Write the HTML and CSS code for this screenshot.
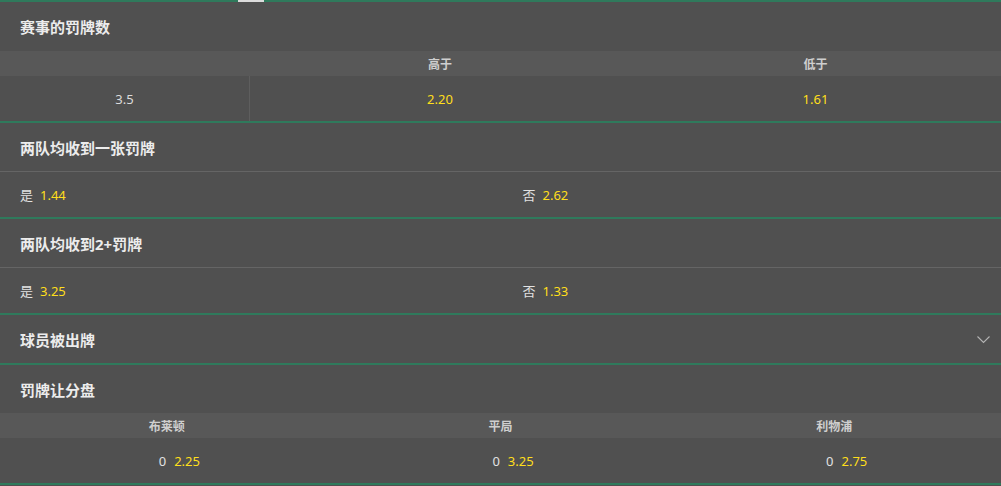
FILE: index.html
```html
<!DOCTYPE html>
<html lang="zh-CN">
<head>
<meta charset="utf-8">
<title>罚牌</title>
<link rel="stylesheet" href="styles.css">
</head>
<body>
<div class="wrap">
  <span class="tab-indicator"></span>

  <section class="market">
    <div class="m-head first">赛事的罚牌数</div>
    <div class="ou colhead"><span></span><span>高于</span><span>低于</span></div>
    <div class="ou vals">
      <span class="line-cell">3.5</span>
      <span class="odds">2.20</span>
      <span class="odds">1.61</span>
    </div>
  </section>

  <section class="market">
    <div class="m-head">两队均收到一张罚牌</div>
    <div class="yn">
      <div class="yn-cell"><span class="lbl">是</span><span class="odds">1.44</span></div>
      <div class="yn-cell"><span class="lbl">否</span><span class="odds">2.62</span></div>
    </div>
  </section>

  <section class="market">
    <div class="m-head">两队均收到2+罚牌</div>
    <div class="yn">
      <div class="yn-cell"><span class="lbl">是</span><span class="odds">3.25</span></div>
      <div class="yn-cell"><span class="lbl">否</span><span class="odds">1.33</span></div>
    </div>
  </section>

  <section class="market">
    <div class="m-head collapsed">
      <span>球员被出牌</span>
      <svg class="chev" width="13" height="8" viewBox="0 0 13 8"><polyline points="0.5,0.5 6.5,6.5 12.5,0.5" fill="none" stroke="#b4b4b4" stroke-width="1.1"/></svg>
    </div>
  </section>

  <section class="market">
    <div class="m-head">罚牌让分盘</div>
    <div class="hc colhead"><span>布莱顿</span><span>平局</span><span>利物浦</span></div>
    <div class="hc vals">
      <div class="hc-cell"><span class="lbl">0</span><span class="odds">2.25</span></div>
      <div class="hc-cell"><span class="lbl">0</span><span class="odds">3.25</span></div>
      <div class="hc-cell"><span class="lbl">0</span><span class="odds">2.75</span></div>
    </div>
  </section>
</div>
</body>
</html>
```

FILE: styles.css
```css
html, body {
  margin: 0;
  padding: 0;
  background: #505050;
}

body {
  font-family: "Noto Sans", "Noto Sans CJK SC", sans-serif;
  color: #e4e4e4;
  font-size: 13px;
}

.wrap {
  position: relative;
  border-top: 2px solid #2f7a5c;
}

.tab-indicator {
  position: absolute;
  left: 238px;
  top: -2px;
  width: 26px;
  height: 2px;
  background: #dcdcdc;
}

.market {
  border-bottom: 2px solid #2f7a5c;
}

.m-head {
  height: 48px;
  display: flex;
  align-items: center;
  justify-content: space-between;
  padding: 0 11px 0 20px;
  font-size: 15px;
  font-weight: 700;
  color: #ececec;
}

.m-head.first {
  height: 49px;
}

.chev {
  display: block;
  margin-top: 2px;
}

.colhead {
  height: 25px;
  background: #585858;
  font-size: 12px;
  font-weight: 700;
  color: #cfcfcf;
}

.colhead span {
  display: flex;
  align-items: center;
  justify-content: center;
}

.ou {
  display: grid;
  grid-template-columns: 250px 380px 1fr;
}

.ou.vals {
  height: 45px;
}

.ou.vals span {
  display: flex;
  align-items: center;
  justify-content: center;
}

.line-cell {
  border-right: 1px solid #5e5e5e;
  color: #dcdcdc;
}

.odds {
  color: #ffdf1b;
}

.lbl {
  color: #e2e2e2;
}

.yn {
  border-top: 1px solid #656565;
  height: 45px;
  display: grid;
  grid-template-columns: 1fr 1fr;
}

.yn-cell {
  display: flex;
  align-items: center;
  gap: 7px;
  padding-left: 20px;
}

.yn-cell + .yn-cell {
  padding-left: 22px;
}

.hc {
  display: grid;
  grid-template-columns: 1fr 1fr 1fr;
}

.hc.vals {
  height: 45px;
}

.hc-cell {
  display: flex;
  align-items: center;
  justify-content: center;
  gap: 8px;
  padding-left: 25px;
}
```
